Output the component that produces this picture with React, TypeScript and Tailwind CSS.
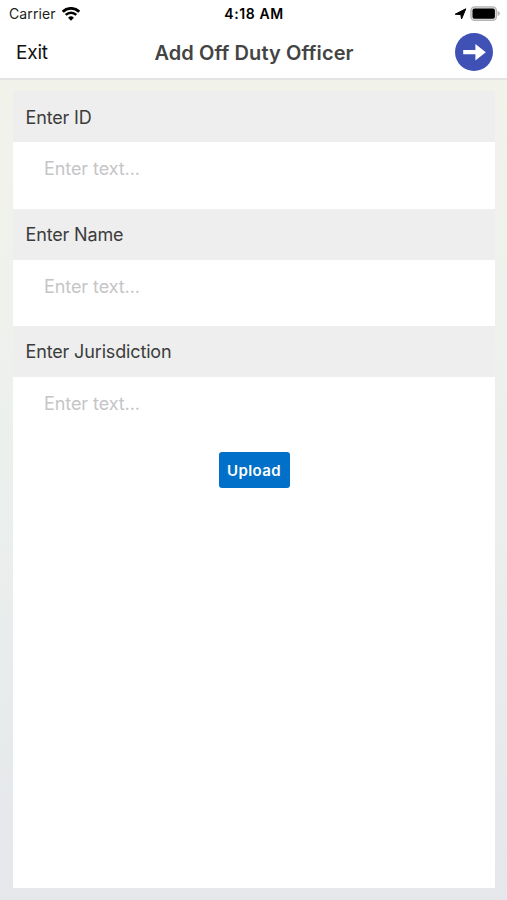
import React, { useState } from "react";

const fields = [
    { id: "officer-id", label: "Enter ID" },
    { id: "officer-name", label: "Enter Name" },
    { id: "jurisdiction", label: "Enter Jurisdiction" },
];

const WifiIcon = () => (
    <svg className="w-[18px] h-[14px]" viewBox="0 0 18 14" fill="none">
        <path d="M0.8 4.7a11.6 11.6 0 0 1 16.4 0" stroke="#000" strokeWidth="2.7" />
        <path d="M3.7 7.9a7.5 7.5 0 0 1 10.6 0" stroke="#000" strokeWidth="2.4" />
        <path d="M6.1 10.7a4.2 4.2 0 0 1 5.8 0L9 13.7z" fill="#000" />
    </svg>
);

const LocationIcon = () => (
    <svg className="w-[13px] h-[12px]" viewBox="0 0 13 12">
        <path
            d="M11.8 0.8L7.6 10.9L6.8 6.6L1.2 6.2z"
            fill="#000"
            stroke="#000"
            strokeWidth="1"
            strokeLinejoin="round"
        />
    </svg>
);

const BatteryIcon = () => (
    <svg className="w-[31px] h-[16px]" viewBox="0 0 31 16">
        <rect x="0.9" y="0.9" width="25.6" height="13.4" rx="3.8" fill="#ddd" stroke="#b4b4b4" strokeWidth="1.3" />
        <rect x="2.5" y="2.4" width="22.4" height="10.4" rx="2" fill="#000" />
        <path d="M27.6 5.1c3 0.8 3 4.2 0 5z" fill="#b4b4b4" />
    </svg>
);

const StatusBar = () => (
    <div className="grid grid-cols-3 items-center h-[27px] text-black">
        <div className="flex items-center gap-[6px] pl-[9px]">
            <span className="text-[14px] leading-5 tracking-[0.1px] text-[#222]">Carrier</span>
            <WifiIcon />
        </div>
        <span className="pl-px text-center text-[14px] leading-5 font-semibold tracking-[0.6px]">
            4:18 AM
        </span>
        <div className="flex items-center justify-end gap-[3px] pr-[6px]">
            <LocationIcon />
            <BatteryIcon />
        </div>
    </div>
);

const Header = () => (
    <header className="h-[80px] shrink-0 bg-white border-b-2 border-[#e3e3e2]">
        <StatusBar />
        <div className="grid grid-cols-[1fr_auto_1fr] items-center h-[50px]">
            <button className="justify-self-start pl-4 pt-[2px] text-[19px] leading-6 tracking-[-0.2px] text-[#111]">
                Exit
            </button>
            <h1 className="pl-px pt-[2px] text-[20px] leading-6 font-semibold tracking-[0.1px] text-[#444]">
                Add Off Duty Officer
            </h1>
            <button className="justify-self-end mr-[14px]" aria-label="Next">
                <svg className="w-[38px] h-[38px]" viewBox="0 0 38 38">
                    <circle cx="19" cy="19" r="19" fill="#3f51b5" />
                    <path
                        d="M8.2 17.1h12.2v-6.2L30.8 19.2l-10.4 8.3v-6.2H8.2z"
                        fill="#fff"
                    />
                </svg>
            </button>
        </div>
    </header>
);

const App = () => {
    const [values, setValues] = useState<Record<string, string>>({});

    return (
        <div className="flex flex-col h-[900px] w-full bg-linear-to-b from-[#f3f3ea] via-[#ecf0ed] to-[#e5e7eb] font-[Inter,sans-serif]">
            <Header />
            <main className="flex-1 flex flex-col mt-[11.4px] mb-3 ml-[13px] mr-3 bg-white">
                {fields.map((field) => (
                    <div key={field.id} className="h-[117.3px]">
                        <label
                            htmlFor={field.id}
                            className="flex items-center h-[51px] pt-px px-[12.5px] bg-[#eee] text-[18px] tracking-[-0.15px] text-[#3c3c3c]"
                        >
                            {field.label}
                        </label>
                        <input
                            id={field.id}
                            type="text"
                            placeholder="Enter text..."
                            value={values[field.id] ?? ""}
                            onChange={(e) =>
                                setValues({ ...values, [field.id]: e.target.value })
                            }
                            className="block w-full h-[53px] px-[31px] text-[18px] tracking-[-0.08px] text-[#3c3c3c] placeholder:text-[#c5c5c7] outline-none"
                        />
                    </div>
                ))}
                <button className="self-center mt-[8.7px] w-[71px] h-[36px] pt-[2px] rounded-[3px] bg-[#0070c9] text-white text-[15px] font-semibold tracking-[0.4px]">
                    Upload
                </button>
            </main>
        </div>
    );
};

export default App;
